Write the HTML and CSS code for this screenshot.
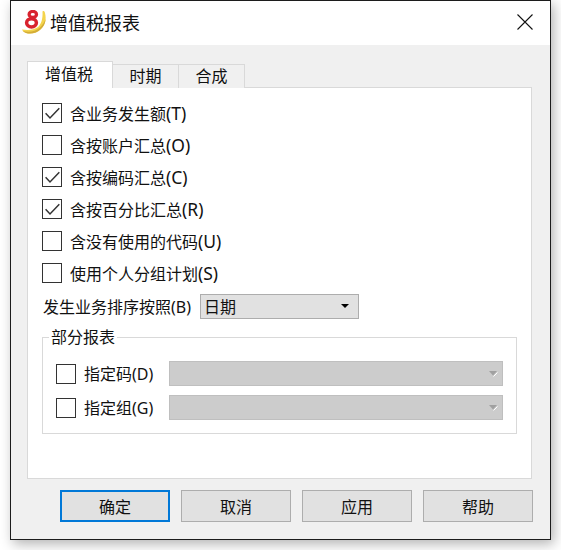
FILE: index.html
```html
<!DOCTYPE html>
<html lang="zh-CN">
<head>
<meta charset="utf-8">
<title>增值税报表</title>
<link rel="stylesheet" href="styles.css">
</head>
<body>
<div class="window">
  <header class="titlebar">
    <svg class="logo" width="25" height="25" viewBox="0 0 25 25">
      <path d="M20.500 1.500C21.500 .5 22.500 1 23 3C24.500 9 23.500 14.500 19 19C15 23 9 24.500 4 23C2 22.300 .5 21 0 19.500C6 20.500 12 20 16 17C19 14.500 21 9 20.500 1.500z" fill="#f4d44d"/>
      <path d="M23.600 9C23.500 12.500 22 16 19 19C15 23 9 24.500 4 23C2.500 22.500 1.500 21.800 .8 21C7 22.500 13.500 21.500 18 17.500C20.500 15 22.500 12 23.600 9z" fill="#d4ad38"/>
      <ellipse cx="10.800" cy="4.400" rx="3.700" ry="3" fill="#fff" stroke="#d8232e" stroke-width="3.300"/>
      <ellipse cx="9.500" cy="12.800" rx="4.900" ry="4.100" fill="#fff" stroke="#d8232e" stroke-width="3.500"/>
    </svg>
    <span class="title">增值税报表</span>
    <svg class="close" width="16" height="16" viewBox="0 0 16 16">
      <path d="M.5.500l15 15M15.500.500l-15 15" stroke="#111" stroke-width="1.100" fill="none"/>
    </svg>
  </header>
  <main class="content">
    <nav class="tabs">
      <span class="tab tab-active">增值税</span>
      <span class="tab">时期</span>
      <span class="tab">合成</span>
    </nav>
    <section class="panel">
      <label class="check-row"><span class="box"><svg width="18" height="18" viewBox="0 0 18 18"><path d="M2.600 9.300l4.400 4.700l9.300-9.700" stroke="#333" stroke-width="1.500" fill="none"/></svg></span><span class="text">含业务发生额<span class="key">(T)</span></span></label>
      <label class="check-row"><span class="box"></span><span class="text">含按账户汇总<span class="key">(O)</span></span></label>
      <label class="check-row"><span class="box"><svg width="18" height="18" viewBox="0 0 18 18"><path d="M2.600 9.300l4.400 4.700l9.300-9.700" stroke="#333" stroke-width="1.500" fill="none"/></svg></span><span class="text">含按编码汇总<span class="key">(C)</span></span></label>
      <label class="check-row"><span class="box"><svg width="18" height="18" viewBox="0 0 18 18"><path d="M2.600 9.300l4.400 4.700l9.300-9.700" stroke="#333" stroke-width="1.500" fill="none"/></svg></span><span class="text">含按百分比汇总<span class="key">(R)</span></span></label>
      <label class="check-row"><span class="box"></span><span class="text">含没有使用的代码<span class="key">(U)</span></span></label>
      <label class="check-row"><span class="box"></span><span class="text">使用个人分组计划<span class="key">(S)</span></span></label>
      <div class="sort-row">
        <span class="text">发生业务排序按照(B)</span>
        <div class="select"><span class="select-value">日期</span><i class="arrow"></i></div>
      </div>
      <fieldset class="group">
        <legend class="legend">部分报表</legend>
        <div class="group-row">
          <span class="box"></span><span class="text group-label">指定码(D)</span>
          <div class="select select-disabled"><span></span><svg width="9" height="6" viewBox="0 0 9 6"><path d="M0 0h8l-4 4.500z" fill="#a0a0a0"/><path d="M4.500 5.500l4-4" stroke="#fff" stroke-width="1" fill="none"/></svg></div>
        </div>
        <div class="group-row">
          <span class="box"></span><span class="text group-label">指定组(G)</span>
          <div class="select select-disabled"><span></span><svg width="9" height="6" viewBox="0 0 9 6"><path d="M0 0h8l-4 4.500z" fill="#a0a0a0"/><path d="M4.500 5.500l4-4" stroke="#fff" stroke-width="1" fill="none"/></svg></div>
        </div>
      </fieldset>
    </section>
    <footer class="buttons">
      <button class="btn btn-default">确定</button>
      <button class="btn">取消</button>
      <button class="btn">应用</button>
      <button class="btn">帮助</button>
    </footer>
  </main>
</div>
</body>
</html>
```
FILE: styles.css
```css
* { box-sizing: border-box; }
html, body { margin: 0; padding: 0; background: #fff; }
body {
  width: 561px;
  height: 550px;
  overflow: hidden;
  padding-left: 10px;
  font-family: "Noto Sans", "Noto Sans CJK SC", sans-serif;
  font-size: 16px;
  color: #111;
}
.window {
  width: 541px;
  height: 540px;
  border: 1px solid #1c1c1c;
  display: flex;
  flex-direction: column;
  box-shadow: 3px 4px 12px rgba(0,0,0,.3);
  background: #f0f0f0;
}
.titlebar {
  height: 44px;
  flex: none;
  background: #fff;
  display: flex;
  align-items: center;
  padding-left: 11px;
  padding-right: 17px;
}
.logo { flex: none; margin-top: -2px; }
.title { font-size: 18px; margin-left: 3px; line-height: 24px; flex: 1; }
.close { flex: none; margin-top: -2px; }
.content {
  flex: 1;
  padding: 16px 0 0 16px;
  display: flex;
  flex-direction: column;
}
.tabs { display: flex; align-items: flex-end; height: 27px; position: relative; z-index: 1; }
.tab {
  width: 67px;
  height: 24px;
  margin-left: -1px;
  border: 1px solid #d9d9d9;
  border-bottom: 0;
  background: #f0f0f0;
  text-align: center;
  line-height: 23px;
}
.tab-active {
  width: 86px;
  height: 27px;
  margin-left: 0;
  padding-right: 2px;
  background: #fff;
  line-height: 25px;
}
.panel {
  width: 505px;
  height: 392px;
  margin-top: -1px;
  background: #fff;
  border: 1px solid #d9d9d9;
  padding: 9px 14px 0;
}
.check-row { display: flex; align-items: center; height: 32px; }
.box {
  width: 20px;
  height: 20px;
  flex: none;
  border: 1px solid #333;
  background: #fff;
  display: block;
}
.box svg { display: block; margin: 0; }
.text { white-space: nowrap; line-height: 22px; padding-top: 2px; }
.check-row .text { margin-left: 8px; padding-top: 0; }
.key { font-size: 17.500px; }
.sort-row { display: flex; align-items: center; height: 32px; margin-top: 1px; padding-left: 1px; }
.select {
  display: flex;
  align-items: center;
  justify-content: space-between;
  width: 159px;
  height: 25px;
  margin-left: 9px;
  background: #e1e1e1;
  border: 1px solid #adadad;
  padding: 0 9px 0 3px;
  line-height: 22px;
}
.select-value { padding-top: 1px; }
.arrow {
  width: 0;
  height: 0;
  border-left: 4px solid transparent;
  border-right: 4px solid transparent;
  border-top: 4px solid #000;
}
.group {
  margin: 5px 0 0;
  padding: 14px 13px 0;
  width: 475px;
  height: 107px;
  border: 1px solid #d9d9d9;
}
.legend { padding: 0 2px; margin-left: -7px; line-height: 20px; }
.group-row { display: flex; align-items: center; height: 25px; margin-bottom: 9px; }
.group-label { margin-left: 8px; width: 85px; padding-top: 0; }
.select-disabled {
  width: 334px;
  margin-left: 0;
  background: #cccccc;
  border-color: #bfbfbf;
  padding-right: 4px;
}
.buttons {
  display: flex;
  gap: 11px;
  padding-left: 33px;
  margin-top: 11px;
}
.btn {
  width: 110px;
  height: 32px;
  padding: 0;
  background: #e1e1e1;
  border: 1px solid #adadad;
  font: inherit;
  color: #111;
}
.btn-default { border: 2px solid #0078d7; }
```
